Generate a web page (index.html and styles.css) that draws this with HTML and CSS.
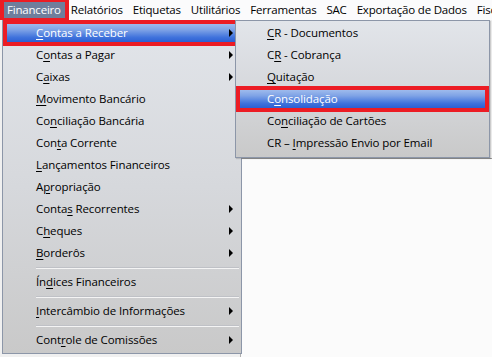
FILE: index.html
```html
<!DOCTYPE html>
<html>
<head>
<meta charset="utf-8">
<link rel="stylesheet" href="styles.css">
</head>
<body>
<div class="menubar">
  <span class="mi active">Financeiro</span>
  <span class="mi">Relatórios</span>
  <span class="mi">Etiquetas</span>
  <span class="mi">Utilitários</span>
  <span class="mi">Ferramentas</span>
  <span class="mi">SAC</span>
  <span class="mi">Exportação de Dados</span>
  <span class="mi">Fiscal</span>
</div>
<div class="workspace">
  <div class="panel"></div>
  <div class="dropdown">
    <div class="item hl sub"><span><u>C</u>ontas a Receber</span><i class="arrow"></i></div>
    <div class="item sub"><span>C<u>o</u>ntas a Pagar</span><i class="arrow"></i></div>
    <div class="item sub"><span>C<u>a</u>ixas</span><i class="arrow"></i></div>
    <div class="item"><span><u>M</u>ovimento Bancário</span></div>
    <div class="item"><span>Co<u>n</u>ciliação Bancária</span></div>
    <div class="item"><span>Con<u>t</u>a Corrente</span></div>
    <div class="item"><span><u>L</u>ançamentos Financeiros</span></div>
    <div class="item"><span>A<u>p</u>ropriação</span></div>
    <div class="item sub"><span>Conta<u>s</u> Recorrentes</span><i class="arrow"></i></div>
    <div class="item sub"><span>C<u>h</u>eques</span><i class="arrow"></i></div>
    <div class="item sub"><span><u>B</u>orderôs</span><i class="arrow"></i></div>
    <div class="sep"></div>
    <div class="item"><span>Ín<u>d</u>ices Financeiros</span></div>
    <div class="sep"></div>
    <div class="item sub"><span><u>I</u>ntercâmbio de Informações</span><i class="arrow"></i></div>
    <div class="sep"></div>
    <div class="item sub"><span>Cont<u>r</u>ole de Comissões</span><i class="arrow"></i></div>
  </div>
  <div class="submenu">
    <div class="item"><span><u>C</u>R - Documentos</span></div>
    <div class="item"><span>C<u>R</u> - Cobrança</span></div>
    <div class="item"><span><u>Q</u>uitação</span></div>
    <div class="item hl"><span>C<u>o</u>nsolidação</span></div>
    <div class="item"><span>Co<u>n</u>ciliação de Cartões</span></div>
    <div class="item"><span>CR – <u>I</u>mpressão Envio por Email</span></div>
  </div>
</div>
</body>
</html>
```
FILE: styles.css
```css
html, body {
  margin: 0;
  padding: 0;
}
body {
  width: 492px;
  height: 357px;
  overflow: hidden;
  background: #f0f0f0;
  font-family: "Open Sans", "Noto Sans", sans-serif;
  font-size: 11.5px;
  color: #000;
}
.menubar {
  height: 20px;
  display: flex;
  align-items: center;
  white-space: nowrap;
  overflow: hidden;
  background: #fbfbfc;
  padding-left: 4px;
  letter-spacing: -0.2px;
}
.mi {
  flex: none;
  padding: 0 4px 0 3px;
  line-height: 16px;
  margin-right: 3px;
}
.mi.active {
  background: #6f7e9c;
  color: #fff;
  outline: 4px solid #ec1c24;
}
.workspace {
  position: relative;
  height: 337px;
  padding-top: 138px;
  box-sizing: border-box;
}
.panel {
  margin-left: 240px;
  height: 199px;
  background: #fbfbfb;
  border-top: 1px solid #9a9a9a;
  border-left: 1px solid #b0b0b0;
}
.dropdown, .submenu {
  position: absolute;
  box-sizing: border-box;
  border: 1px solid #8c96a8;
  background: linear-gradient(#e2e5ea, #d6d8dc 50%, #c9c9c9);
  padding: 1px 0;
  letter-spacing: -0.1px;
}
.dropdown {
  left: 2px;
  top: 0;
  width: 240px;
  height: 334px;
}
.submenu {
  left: 235px;
  top: 0;
  width: 255px;
  height: 138px;
  box-shadow: 1px 1px 1px rgba(0,0,0,0.15);
}
.item {
  height: 22px;
  box-sizing: border-box;
  padding-bottom: 2px;
  margin: 0 2px;
  display: flex;
  align-items: center;
  justify-content: space-between;
  white-space: nowrap;
}
.dropdown .item {
  padding-left: 31px;
  padding-right: 6px;
}
.submenu .item {
  padding-left: 29px;
}
.item u {
  text-decoration-thickness: 1px;
  text-underline-offset: 2px;
}
.item.hl {
  background: linear-gradient(#a9c3ef, #7fa3e6 35%, #3f72dc 70%, #2557cf);
  color: #fff;
  outline: 4px solid #ec1c24;
  outline-offset: -2px;
}
.arrow {
  width: 0;
  height: 0;
  margin-top: 2px;
  border-left: 4px solid #000;
  border-top: 4px solid transparent;
  border-bottom: 4px solid transparent;
}
.sep {
  height: 7px;
  margin-left: 33px;
  margin-right: 2px;
  box-sizing: border-box;
  padding-top: 3px;
}
.sep::before {
  content: "";
  display: block;
  border-top: 1px solid #bfc1c6;
  border-bottom: 1px solid #f4f4f4;
}
```
